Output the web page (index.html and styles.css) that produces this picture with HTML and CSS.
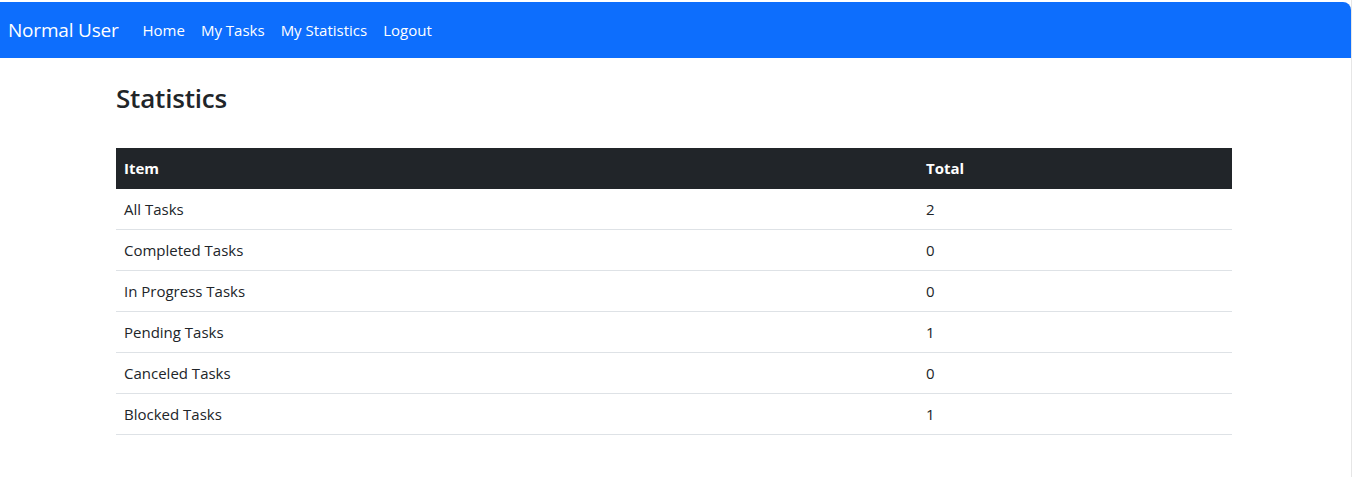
FILE: index.html
```html
<!DOCTYPE html>
<html>

<head>
  <title>My Statistics</title>
  <meta name="viewport" content="width=device-width, initial-scale=1">
  <link rel="stylesheet" href="styles.css">
</head>

<body>
  <div class="page">
    <nav class="navbar">
      <a class="brand" href="#">Normal User</a>
      <ul class="nav-links">
        <li><a href="#">Home</a></li>
        <li><a href="#">My Tasks</a></li>
        <li><a href="#">My Statistics</a></li>
        <li><a href="#">Logout</a></li>
      </ul>
    </nav>

    <div class="container">
      <h3>Statistics</h3>
      <table class="stats">
        <thead>
          <tr>
            <th class="col-item">Item</th>
            <th>Total</th>
          </tr>
        </thead>
        <tbody>
          <tr><td>All Tasks</td><td>2</td></tr>
          <tr><td>Completed Tasks</td><td>0</td></tr>
          <tr><td>In Progress Tasks</td><td>0</td></tr>
          <tr><td>Pending Tasks</td><td>1</td></tr>
          <tr><td>Canceled Tasks</td><td>0</td></tr>
          <tr><td>Blocked Tasks</td><td>1</td></tr>
        </tbody>
      </table>
    </div>
  </div>
</body>

</html>
```

FILE: styles.css
```css
html,
body {
  margin: 0;
  padding: 0;
  height: 100%;
  background: #fff;
}

body {
  font-family: "Open Sans", "Noto Sans", sans-serif;
  color: #212529;
  font-size: 15px;
}

.page {
  width: 1352px;
  min-height: 100%;
  box-sizing: border-box;
  padding-top: 2px;
  border-right: 1px solid #e6e6e6;
}

/* NAVBAR */
.navbar {
  display: flex;
  align-items: center;
  height: 56px;
  background-color: #0d6efd;
  border-top-right-radius: 8px;
  padding: 0 8px;
}

.brand {
  color: #fff;
  font-size: 19px;
  text-decoration: none;
  margin-right: 16px;
  letter-spacing: -0.2px;
}

.nav-links {
  display: flex;
  list-style: none;
  margin: 0;
  padding: 0;
}

.nav-links a {
  display: block;
  color: #fff;
  text-decoration: none;
  font-size: 15px;
  padding: 8px;
}

/* CONTENT */
.container {
  width: 1116px;
  margin-left: 116px;
  padding-top: 24px;
}

h3 {
  font-size: 26px;
  font-weight: 600;
  line-height: 1.3;
  margin: 0 0 32px;
  letter-spacing: -0.2px;
}

.stats {
  width: 100%;
  border-collapse: collapse;
}

.stats th,
.stats td {
  text-align: left;
  padding: 0 8px;
  box-sizing: border-box;
}

.stats th {
  height: 41px;
  background-color: #212529;
  color: #fff;
  font-weight: 700;
  font-size: 15px;
  border-bottom: 1px solid #212529;
}

.stats td {
  height: 41px;
  border-bottom: 1px solid #dee2e6;
}

.col-item {
  width: 802px;
}
```
